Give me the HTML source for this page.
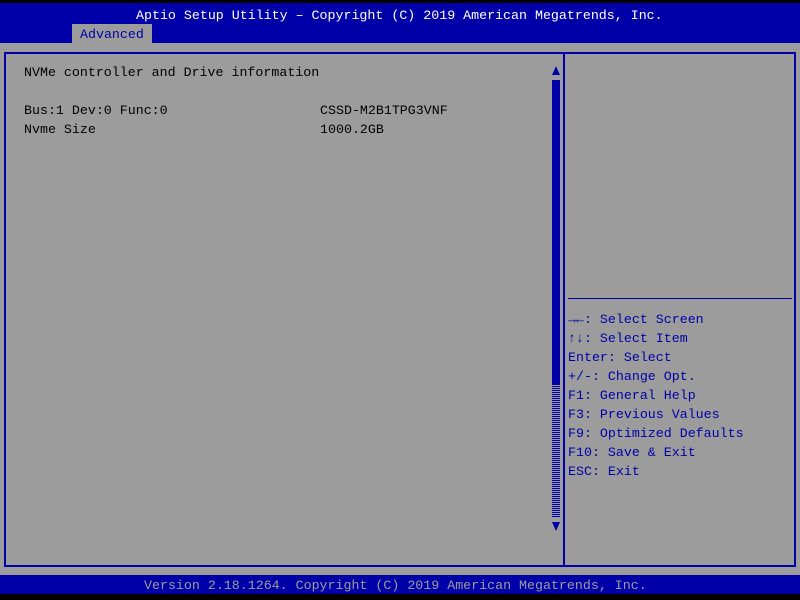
<!DOCTYPE html>
<html><head><style>
body{margin:0;width:800px;height:600px;background:#000;position:relative;overflow:hidden;font-family:"Liberation Mono",monospace;font-size:13.3px}
div{position:absolute}
.t{white-space:pre;line-height:19px}
</style></head><body>
<div style="left:0;top:3px;width:800px;height:40px;background:#0000a8"></div>
<div class="t" style="left:136px;top:6px;color:#fff">Aptio Setup Utility – Copyright (C) 2019 American Megatrends, Inc.</div>
<div style="left:72px;top:24px;width:80px;height:19px;background:#9c9c9c"></div>
<div class="t" style="left:80px;top:25px;color:#0000a8">Advanced</div>
<div style="left:0;top:43px;width:800px;height:532px;background:#9c9c9c"></div>
<div style="left:4px;top:52px;width:788px;height:511px;border:2px solid #0000a8"></div>
<div style="left:563px;top:52px;width:2px;height:514px;background:#0000a8"></div>
<div class="t" style="left:24px;top:63px;color:#000">NVMe controller and Drive information</div>
<div class="t" style="left:24px;top:101px;color:#000">Bus:1 Dev:0 Func:0</div>
<div class="t" style="left:320px;top:101px;color:#000">CSSD-M2B1TPG3VNF</div>
<div class="t" style="left:24px;top:120px;color:#000">Nvme Size</div>
<div class="t" style="left:320px;top:120px;color:#000">1000.2GB</div>
<div style="left:552px;top:66px;width:0;height:0;border-left:4px solid transparent;border-right:4px solid transparent;border-bottom:9px solid #0000a8"></div>
<div style="left:552px;top:80px;width:8px;height:305px;background:#0000a8"></div>
<div style="left:552px;top:385px;width:8px;height:132px;background:repeating-linear-gradient(0deg,#0000a8 0 1px,#9c9c9c 1px 2px)"></div>
<div style="left:552px;top:522px;width:0;height:0;border-left:4px solid transparent;border-right:4px solid transparent;border-top:9px solid #0000a8"></div>
<div style="left:568px;top:298px;width:224px;height:1px;background:#0000a8"></div>
<div class="t" style="left:568px;top:310px;color:#0000a8"><b>→←</b>: Select Screen
<b>↑↓</b>: Select Item
Enter: Select
+/-: Change Opt.
F1: General Help
F3: Previous Values
F9: Optimized Defaults
F10: Save &amp; Exit
ESC: Exit</div>
<div style="left:0;top:575px;width:800px;height:19px;background:#0000a8"></div>
<div class="t" style="left:144px;top:576px;color:#9c9c9c">Version 2.18.1264. Copyright (C) 2019 American Megatrends, Inc.</div>
</body></html>
